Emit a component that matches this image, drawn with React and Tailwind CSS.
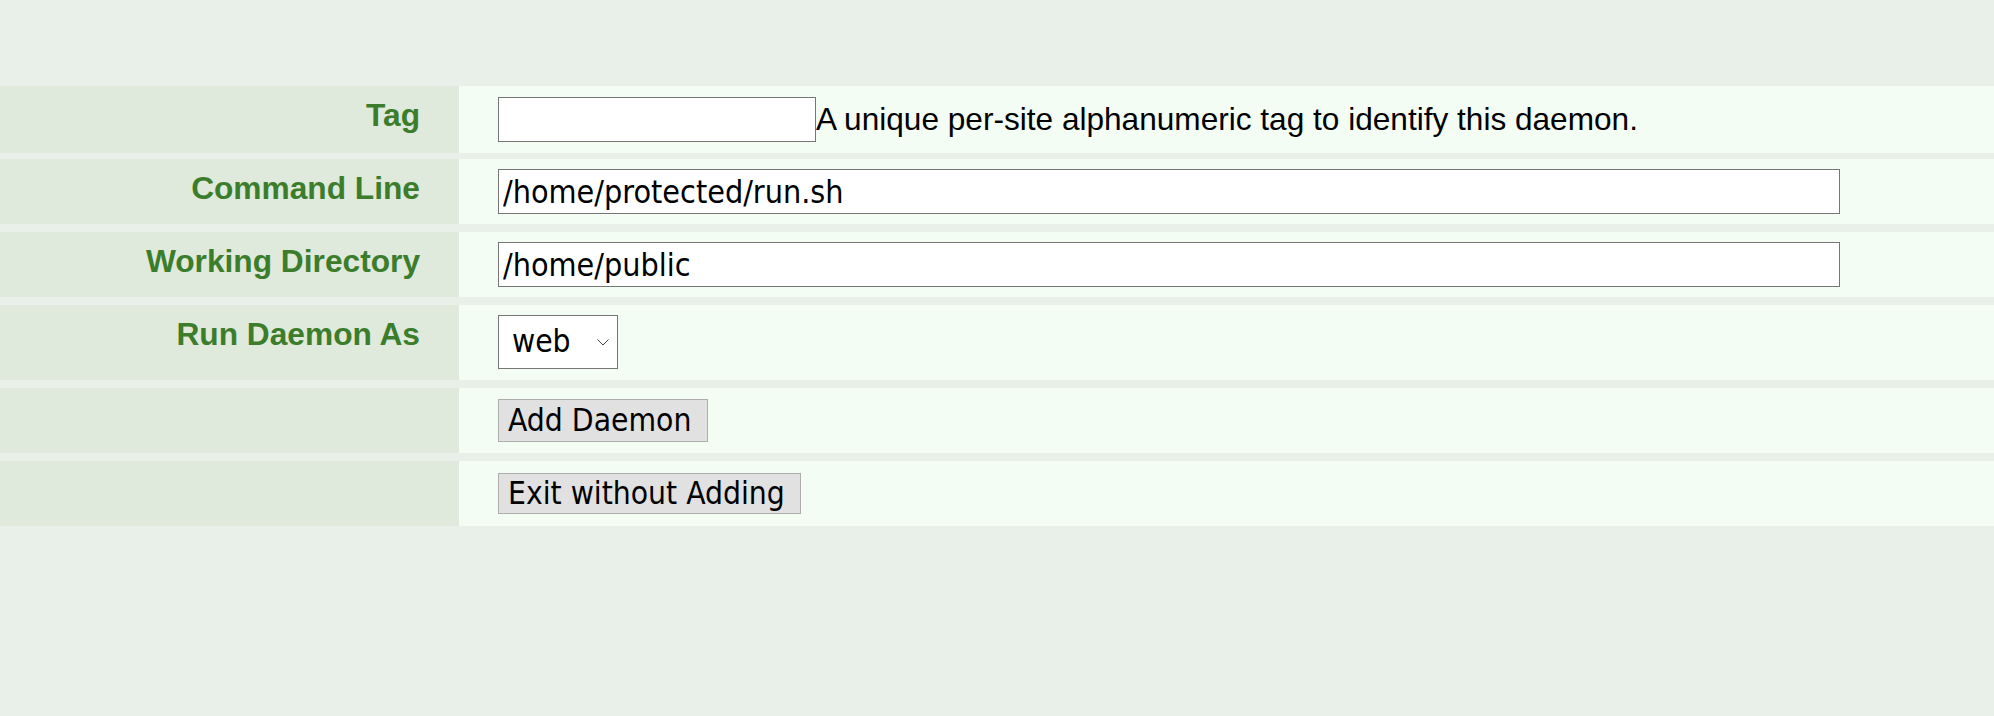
import React from "react";

const label = "flex justify-end bg-[#dfe9dc] pt-[6px] pr-[39px] font-['Liberation_Sans',Arial,sans-serif] text-[31.7px] font-bold leading-normal text-[#3b7d2b]";
const cell = "flex items-start bg-[#f4fdf4] pl-[39px] pt-[10px] pb-[10px]";
const control = "font-['DejaVu_Sans_Condensed',Tahoma,sans-serif] text-[31.5px] text-black";
const field = "font-['DejaVu_Sans_Condensed',Tahoma,sans-serif] text-[32px] text-black h-[45px] border border-[#767676] bg-white px-[4px] leading-none outline-none";

function Row({ name, children, tall }) {
  return (
    <div className={`grid grid-cols-[459px_1fr] ${tall ? "h-[75px]" : "h-[65px]"}`}>
      <div className={label}>{name}</div>
      <div className={cell}>{children}</div>
    </div>
  );
}

export default function App() {
  return (
    <div className="min-h-[716px] bg-[#e9f0e9] pt-[86px]">
      <div className="flex flex-col gap-2">
        <Row name="Tag">
          <div className="flex items-center">
            <input type="text" className={`${field} w-[318px]`} />
            <span className="font-['Liberation_Sans',Arial,sans-serif] text-[31.6px] leading-normal text-black">
              A unique per-site alphanumeric tag to identify this daemon.
            </span>
          </div>
        </Row>
        <Row name="Command Line">
          <input type="text" defaultValue="/home/protected/run.sh" className={`${field} w-[1342px]`} />
        </Row>
        <Row name="Working Directory">
          <input type="text" defaultValue="/home/public" className={`${field} w-[1342px]`} />
        </Row>
        <Row name="Run Daemon As" tall>
          <div className="relative">
            <select
              defaultValue="web"
              className={`${control} h-[54px] w-[120px] appearance-none border border-[#767676] bg-white pl-[13px] outline-none`}
            >
              <option value="web">web</option>
            </select>
            <svg
              className="pointer-events-none absolute right-[9px] top-[24px]"
              width="12"
              height="7"
              viewBox="0 0 12 7"
              fill="none"
            >
              <path d="M0.5 0.5l5.5 5.5L11.5 0.5" stroke="#444" strokeWidth="1" />
            </svg>
          </div>
        </Row>
        <Row name="">
          <button className={`${control} mt-px h-[43px] border border-[#adadad] bg-[#e1e1e1] pl-[9px] pr-[16px] leading-none`}>
            Add Daemon
          </button>
        </Row>
        <Row name="">
          <button className={`${control} mt-[2px] h-[41px] border border-[#adadad] bg-[#e1e1e1] pl-[9px] pr-[15px] leading-none`}>
            Exit without Adding
          </button>
        </Row>
      </div>
    </div>
  );
}
